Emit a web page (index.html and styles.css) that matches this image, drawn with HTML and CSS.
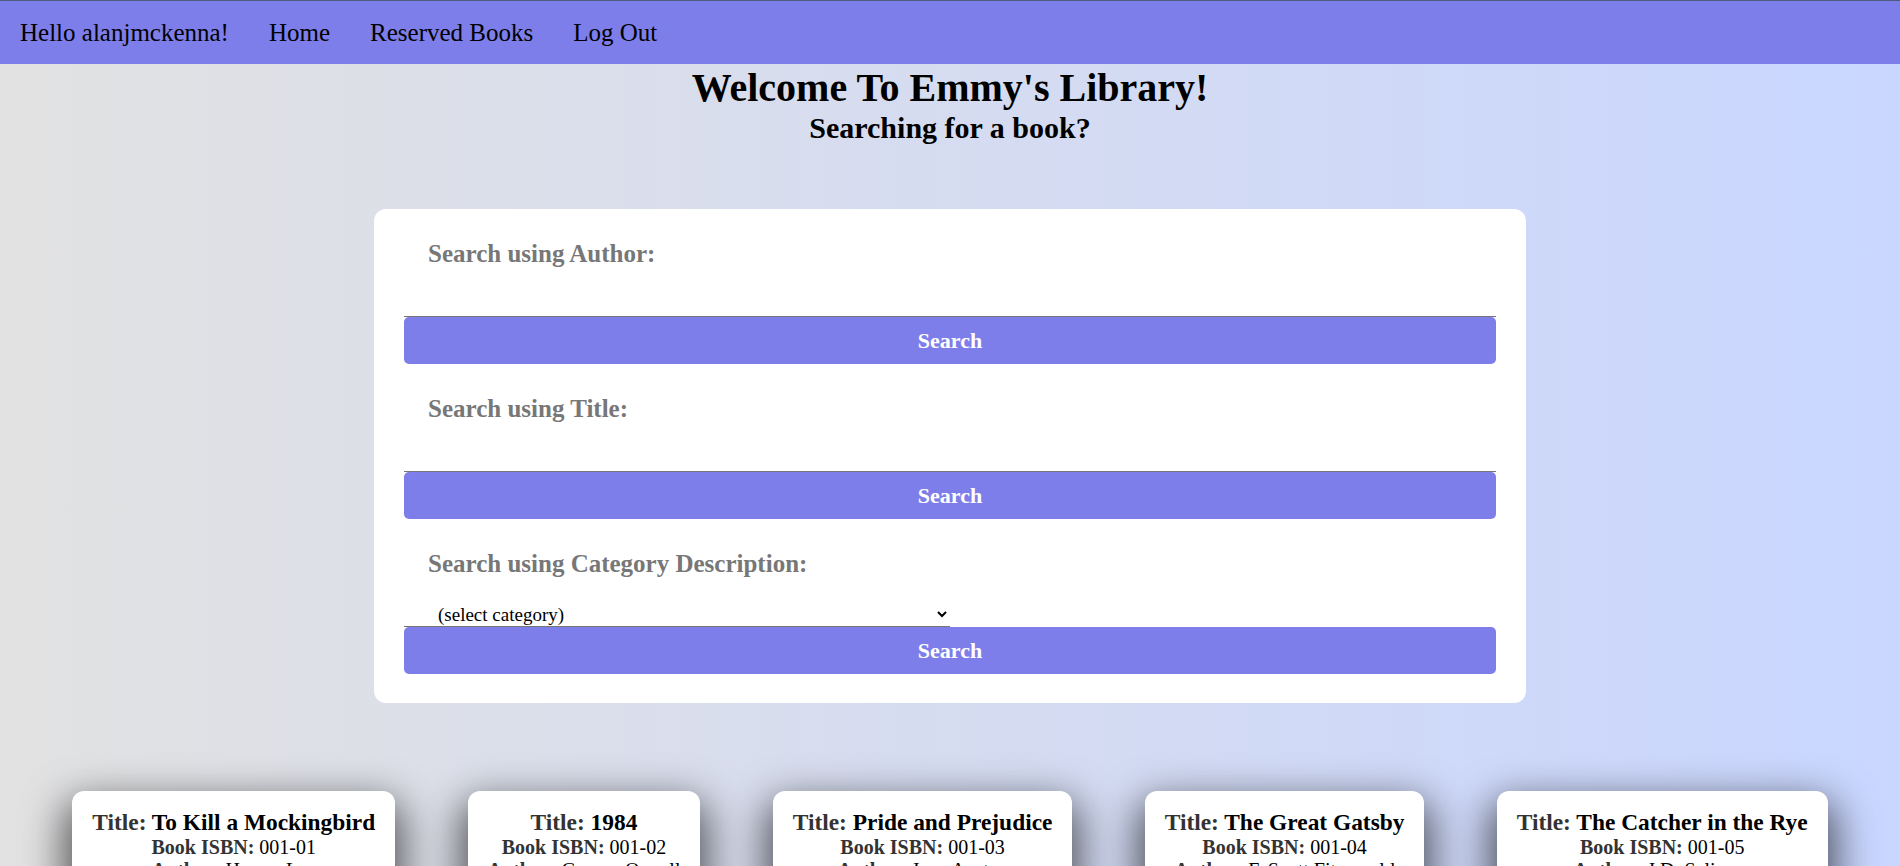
FILE: index.html
```html
<!DOCTYPE html>
<html lang="en">
<head>
<meta charset="utf-8">
<title>Emmy's Library</title>
<link rel="stylesheet" href="styles.css">
</head>
<body>
<nav class="topnav">
  <span class="nav-item">Hello alanjmckenna!</span>
  <a class="nav-item" href="#">Home</a>
  <a class="nav-item" href="#">Reserved Books</a>
  <a class="nav-item" href="#">Log Out</a>
</nav>

<header class="intro">
  <h1 class="intro-title">Welcome To Emmy's Library!</h1>
  <h2 class="intro-sub">Searching for a book?</h2>
</header>

<main class="content">
  <section class="search-card">
    <form class="search-group">
      <label class="search-label" for="author">Search using Author:</label>
      <div class="field"><input class="search-input" id="author" type="text"></div>
      <button class="search-btn" type="button">Search</button>
    </form>
    <form class="search-group">
      <label class="search-label" for="title">Search using Title:</label>
      <div class="field"><input class="search-input" id="title" type="text"></div>
      <button class="search-btn" type="button">Search</button>
    </form>
    <form class="search-group">
      <label class="search-label" for="cat">Search using Category Description:</label>
      <div class="field field-select">
        <select class="search-select" id="cat">
          <option>(select category)</option>
          <option>Fiction</option>
          <option>Classics</option>
        </select>
      </div>
      <button class="search-btn" type="button">Search</button>
    </form>
  </section>

  <section class="book-list">
    <article class="book-card">
      <h3 class="book-title"><span class="lbl">Title:</span> To Kill a Mockingbird</h3>
      <p class="book-line"><b class="lbl">Book ISBN:</b> 001-01</p>
      <p class="book-line"><b class="lbl">Author:</b> Harper Lee</p>
      <p class="book-line"><b class="lbl">Year:</b> 1960</p>
    </article>
    <article class="book-card">
      <h3 class="book-title"><span class="lbl">Title:</span> 1984</h3>
      <p class="book-line"><b class="lbl">Book ISBN:</b> 001-02</p>
      <p class="book-line"><b class="lbl">Author:</b> George Orwell</p>
      <p class="book-line"><b class="lbl">Year:</b> 1949</p>
    </article>
    <article class="book-card">
      <h3 class="book-title"><span class="lbl">Title:</span> Pride and Prejudice</h3>
      <p class="book-line"><b class="lbl">Book ISBN:</b> 001-03</p>
      <p class="book-line"><b class="lbl">Author:</b> Jane Austen</p>
      <p class="book-line"><b class="lbl">Year:</b> 1813</p>
    </article>
    <article class="book-card">
      <h3 class="book-title"><span class="lbl">Title:</span> The Great Gatsby</h3>
      <p class="book-line"><b class="lbl">Book ISBN:</b> 001-04</p>
      <p class="book-line"><b class="lbl">Author:</b> F. Scott Fitzgerald</p>
      <p class="book-line"><b class="lbl">Year:</b> 1925</p>
    </article>
    <article class="book-card">
      <h3 class="book-title"><span class="lbl">Title:</span> The Catcher in the Rye</h3>
      <p class="book-line"><b class="lbl">Book ISBN:</b> 001-05</p>
      <p class="book-line"><b class="lbl">Author:</b> J.D. Salinger</p>
      <p class="book-line"><b class="lbl">Year:</b> 1951</p>
    </article>
  </section>
</main>
</body>
</html>
```

FILE: styles.css
```css
html {
  background: linear-gradient(to left, #c9d6ff, #e2e2e2);
  min-height: 100%;
}

body {
  margin: 0;
  font-family: "Liberation Serif", "Times New Roman", serif;
  font-size: 20px;
  color: #000;
}

.topnav {
  display: flex;
  align-items: center;
  height: 64px;
  box-sizing: border-box;
  border-top: 1px solid #4b5c7c;
  background: #7d7eea;
}

.nav-item {
  padding: 0 20px;
  font-size: 25px;
  color: #000;
  text-decoration: none;
}

.intro {
  text-align: center;
}

.intro-title {
  margin: 0;
  font-size: 40px;
  font-weight: bold;
}

.intro-sub {
  margin: 0;
  font-size: 30px;
  font-weight: bold;
}

.search-card {
  width: 1092px;
  margin: 64px auto 88px;
  padding: 30px 30px 29px;
  background: #fff;
  border-radius: 12px;
}

.search-group {
  display: flex;
  flex-direction: column;
  margin: 0;
}

.search-group + .search-group {
  margin-top: 30px;
}

.search-label {
  padding-left: 24px;
  padding-top: 1px;
  font-size: 25px;
  font-weight: bold;
  color: #777;
}

.field {
  display: flex;
  align-items: flex-end;
  height: 49px;
}

.search-input {
  width: 100%;
  height: 49px;
  box-sizing: border-box;
  border: none;
  border-bottom: 1px solid #767676;
  background: transparent;
  font-family: inherit;
  font-size: 20px;
  outline: none;
}

.search-select {
  width: 50%;
  height: 25px;
  box-sizing: border-box;
  padding: 0 0 0 30px;
  border: none;
  border-bottom: 1px solid #767676;
  border-radius: 0;
  background: #fff;
  font-family: "Liberation Serif", "Times New Roman", serif;
  font-size: 19px;
  color: #000;
}

.search-btn {
  height: 47px;
  border: none;
  border-radius: 5px;
  background: #7d7eea;
  color: #fff;
  font-family: inherit;
  font-size: 22px;
  font-weight: bold;
  cursor: pointer;
}

.book-list {
  display: flex;
  justify-content: space-evenly;
  align-items: flex-start;
  padding-bottom: 60px;
}

.book-card {
  padding: 18px 20px 20px;
  background: #fff;
  border-radius: 12px;
  box-shadow: 0 18px 40px 8px rgba(0, 0, 0, 0.62);
  text-align: center;
}

.book-title {
  margin: 0;
  font-size: 23.4px;
  font-weight: bold;
}

.book-line {
  margin: 0;
}

.lbl {
  color: #333;
  font-weight: bold;
}
```
